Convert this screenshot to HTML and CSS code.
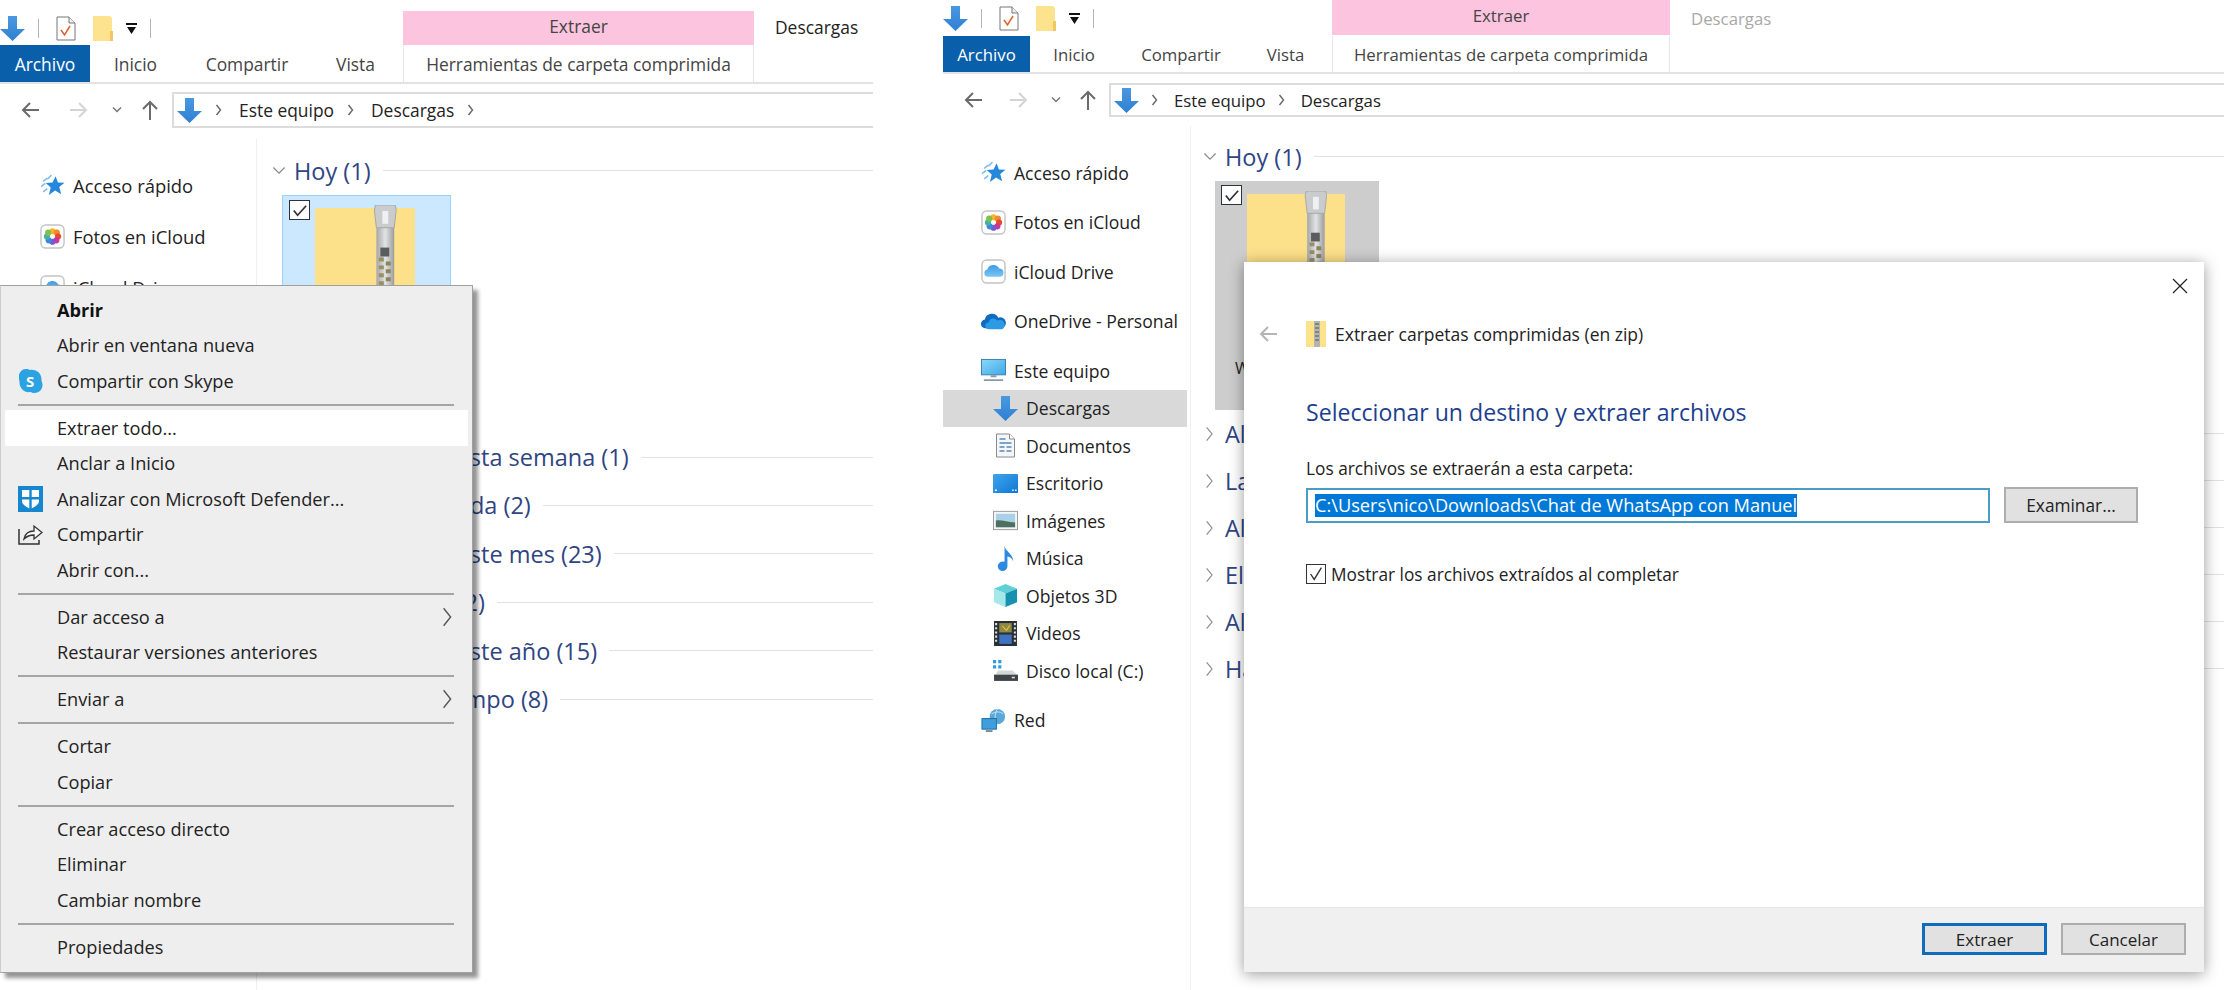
FILE: index.html
```html
<!DOCTYPE html>
<html lang="es">
<head>
    <meta charset="UTF-8">
    <title>Extraer todo</title>
    <link rel="stylesheet" href="styles.css">
</head>
<body>

    <svg class="defs" width="0" height="0">
        <defs>
            <linearGradient id="g-zipper" x1="0" x2="1" y1="0" y2="0"><stop offset="0" stop-color="#a4a6a8"/><stop offset=".5" stop-color="#e2e3e4"/><stop offset="1" stop-color="#9a9c9e"/></linearGradient>
            <linearGradient id="g-arrow" x1="0" x2="0" y1="0" y2="1"><stop offset="0" stop-color="#4a98e0"/><stop offset="1" stop-color="#2f80d4"/></linearGradient>
            <linearGradient id="g-cloud" x1="0" x2="0" y1="0" y2="1"><stop offset="0" stop-color="#3d9be8"/><stop offset="1" stop-color="#7cc6f2"/></linearGradient>
            <linearGradient id="g-screen" x1="0" x2="1" y1="0" y2="1"><stop offset="0" stop-color="#3fa4ee"/><stop offset="1" stop-color="#0f78d4"/></linearGradient>
            <linearGradient id="g-monitor" x1="0" x2="1" y1="0" y2="1"><stop offset="0" stop-color="#8cd8f8"/><stop offset="1" stop-color="#3fa8e6"/></linearGradient>
        </defs>
        <symbol id="i-down" viewBox="0 0 25 25"><path d="M8 0h9v13h8L12.500 25 0 13h8z" fill="url(#g-arrow)"/></symbol>
        <symbol id="i-doc" viewBox="0 0 20 25"><path d="M1 1h12l6 6v17H1z" fill="#fff" stroke="#777"/><path d="M13 1v6h6" fill="#eee" stroke="#777"/><path d="M5 14l3.500 5L14 10" fill="none" stroke="#d9622b" stroke-width="1.500"/></symbol>
        <symbol id="i-folder" viewBox="0 0 20 25"><path d="M0 0h17l2 2v23H0z" fill="#fde38e"/><path d="M17 15h3v10h-3z" fill="#f0c761"/></symbol>
        <symbol id="i-drop" viewBox="0 0 11 11"><path d="M0 0h11v2H0zM1 4h9L5.500 11z" fill="#111"/></symbol>
        <symbol id="i-back" viewBox="0 0 20 20"><path d="M19 10H3M10 3l-7 7 7 7" fill="none" stroke="currentColor" stroke-width="2"/></symbol>
        <symbol id="i-up" viewBox="0 0 20 22"><path d="M10 21V3M3 10l7-7 7 7" fill="none" stroke="currentColor" stroke-width="2"/></symbol>
        <symbol id="i-chev-down" viewBox="0 0 10 8"><path d="M1 1.500l4 4 4-4" fill="none" stroke="currentColor"/></symbol>
        <symbol id="i-chev-right" viewBox="0 0 8 12"><path d="M1.500 1l4 5-4 5" fill="none" stroke="currentColor"/></symbol>
        <symbol id="i-star" viewBox="0 0 24 24"><path d="M15 3l2.200 6 6.300.3-5 4.200 1.800 7-5.800-3.800L8.500 21l1.800-7-4.800-4.400 6.500-.4z" fill="#2688dc"/><path d="M11 2L7 6M7 5L3 8M5 10l-4 3M7 15l-4 3" stroke="#7fbdee" stroke-width="1.500"/></symbol>
        <symbol id="i-photos" viewBox="0 0 26 26"><rect x="1" y="1" width="24" height="24" rx="5" fill="#fff" stroke="#c4c4c4" stroke-width="1.500"/><circle cx="13" cy="7.500" r="3.200" fill="#f7b52c"/><circle cx="17.500" cy="9" r="3.200" fill="#f08a2c"/><circle cx="18.800" cy="13" r="3.200" fill="#e5492f"/><circle cx="17" cy="17" r="3.200" fill="#c9379a"/><circle cx="13" cy="18.500" r="3.200" fill="#7c58c8"/><circle cx="9" cy="17" r="3.200" fill="#3f86dc"/><circle cx="7.200" cy="13" r="3.200" fill="#3fb4a4"/><circle cx="8.500" cy="9" r="3.200" fill="#7fc04a"/></symbol>
        <symbol id="i-icloud" viewBox="0 0 26 26"><rect x="1" y="1" width="24" height="24" rx="5" fill="#fff" stroke="#c4c4c4" stroke-width="1.500"/><path d="M7 18.500a3.800 3.800 0 0 1-.5-7.500 6.800 6.800 0 0 1 12.500-1 4.300 4.300 0 0 1 1 8.500z" fill="url(#g-cloud)"/></symbol>
        <symbol id="i-onedrive" viewBox="0 0 26 18"><path d="M5 16a4.500 4.500 0 0 1-1-9 7.500 7.500 0 0 1 14-2 5.500 5.500 0 0 1 4 11z" fill="#0f6cc0"/><path d="M8 17a3.500 3.500 0 0 1 0-7 5 5 0 0 1 9-2 4.500 4.500 0 0 1 5 9z" fill="#2b9be6"/></symbol>
        <symbol id="i-monitor" viewBox="0 0 26 24"><rect x=".5" y=".5" width="25" height="16" fill="url(#g-monitor)" stroke="#3a7fb5"/><path d="M10 18h6M3 22h20" stroke="#8a9aa6" stroke-width="2"/></symbol>
        <symbol id="i-docs" viewBox="0 0 20 25"><path d="M1 1h13l5 5v18H1z" fill="#f4f7fa" stroke="#8a8a8a"/><path d="M14 1v5h5" fill="#fff" stroke="#8a8a8a"/><path d="M4 6h6M4 10h12M4 14h5M11 14h5M4 18h5M11 18h5" stroke="#5b89b5" stroke-width="1.500"/></symbol>
        <symbol id="i-desktop" viewBox="0 0 26 20"><rect width="26" height="20" rx="1" fill="url(#g-screen)"/><path d="M2 17h2M20 17h1.500M23 17h1.500" stroke="#fff" stroke-width="1.500"/></symbol>
        <symbol id="i-images" viewBox="0 0 26 20"><rect x=".5" y=".5" width="25" height="19" fill="#f5f5f5" stroke="#9a9a9a"/><rect x="3" y="3" width="20" height="14" fill="#a9d2ea"/><path d="M3 10c6-1 12 2 20 2v5H3z" fill="#4f6f60"/></symbol>
        <symbol id="i-music" viewBox="0 0 20 26"><path d="M9 0c1 6 9 8 9 16-1-3-4-5-6-5v10a5 5 0 1 1-3-4.500z" fill="#2c8ae0"/></symbol>
        <symbol id="i-cube" viewBox="0 0 26 26"><path d="M13 1l12 5-12 5L1 6z" fill="#5fd1d6"/><path d="M1 6l12 5v14L1 20z" fill="#a5e8ea"/><path d="M25 6l-12 5v14l12-5z" fill="#1592b0"/></symbol>
        <symbol id="i-film" viewBox="0 0 22 24"><rect width="22" height="24" fill="#2a2f36"/><rect x="5" y="2" width="12" height="9" fill="#8d8a45"/><rect x="5" y="13" width="12" height="9" fill="#3f72c0"/><path d="M8 5l4 4 3-5" stroke="#e8c23a" fill="none"/><path d="M2 2v20M20 2v20" stroke="#ddd" stroke-width="2" stroke-dasharray="2 2"/></symbol>
        <symbol id="i-disk" viewBox="0 0 24 22"><path d="M0 1h3v3H0zM5 1h3v3H5zM0 6h3v3H0zM5 6h3v3H5z" fill="#2f9ae0"/><path d="M2 15l3-4h14l4 4z" fill="#d5d8da"/><rect x="1" y="15" width="23" height="6" fill="#3f4449"/><rect x="18" y="17" width="3" height="1.500" fill="#ddd"/></symbol>
        <symbol id="i-net" viewBox="0 0 26 26"><circle cx="17" cy="9" r="8" fill="#5aa7d8"/><path d="M11 6c4-2 8-3 12 0M17 1c-3 5-3 11 0 16" stroke="#cfe6f5" fill="none"/><rect x="1" y="11" width="15" height="11" fill="#3f9fdc" stroke="#1c6aa5"/><path d="M5 24h7" stroke="#7a8a96" stroke-width="2"/></symbol>
        <symbol id="i-skype" viewBox="0 0 24 26"><path d="M7 1c2 0 3 .5 4 1 7-1 12 4 11.500 11 .5 1 1 2.500 1 4 0 5-4 8-8 8-2 0-3-.5-4-1C5 25 0 20 .5 13 0 12-.5 10.500-.5 9 0 4 3 1 7 1z" fill="#2ba3e2"/></symbol>
        <symbol id="i-shield" viewBox="0 0 25 26"><rect width="25" height="26" fill="#1487cf"/><path d="M4 4h17v11c0 4-5 6-8.500 8C9 21 4 19 4 15z" fill="#fff"/><path d="M11.300 4h2.400v19h-2.400zM4 11h17v2.400H4z" fill="#1487cf"/></symbol>
        <symbol id="i-share" viewBox="0 0 25 21"><path d="M1 5v15h20v-4" fill="none" stroke="#333" stroke-width="1.500"/><path d="M6 15c1-5 4-8 10-8V2l8 6.500-8 6.500v-4c-4 0-7 1-10 4z" fill="#f7f7f7" stroke="#333" stroke-width="1.300"/></symbol>
        <symbol id="i-zip" viewBox="0 -3 101 173" preserveAspectRatio="xMidYMin slice"><rect width="101" height="170" fill="#fde08a"/><rect x="62" y="0" width="18" height="170" fill="url(#g-zipper)"/><path d="M61 -3h20l1 5-2 18H62l-2-18z" fill="#c9cbcd" stroke="#a5a7a9"/><rect x="68" y="3" width="6" height="13" fill="#eef0f1"/><rect x="66" y="40" width="9" height="9" fill="#5a5c5e"/><path d="M67 50v120" stroke="#9a8e62" stroke-width="5" stroke-dasharray="4 4" fill="none"/><path d="M74 54v116" stroke="#8f8458" stroke-width="5" stroke-dasharray="4 4" fill="none"/></symbol>
        <symbol id="i-zip-small" viewBox="0 0 20 26"><rect width="20" height="26" fill="#fde28a"/><rect x="8" width="6" height="26" fill="#b5b5b0"/><path d="M9 3h4M9 7h4M9 11h4M9 15h4M9 19h4" stroke="#55524a"/></symbol>
    </svg>

    <div class="page">

        <!-- VENTANA IZQUIERDA -->
        <section class="explorer explorer-left">
            <div class="titlebar">
                <div class="qat">
                    <svg class="qat-arrow"><use href="#i-down"/></svg>
                    <span class="qat-sep"></span>
                    <svg class="qat-doc"><use href="#i-doc"/></svg>
                    <svg class="qat-folder"><use href="#i-folder"/></svg>
                    <svg class="qat-drop"><use href="#i-drop"/></svg>
                    <span class="qat-sep"></span>
                </div>
                <div class="context-tab">Extraer</div>
                <div class="window-title">Descargas</div>
            </div>
            <nav class="tabs">
                <div class="tab tab-file">Archivo</div>
                <div class="tab tab-home">Inicio</div>
                <div class="tab tab-share">Compartir</div>
                <div class="tab tab-view">Vista</div>
                <div class="tab tab-tools">Herramientas de carpeta comprimida</div>
            </nav>
            <div class="address-row">
                <svg class="nav-back"><use href="#i-back"/></svg>
                <svg class="nav-forward"><use href="#i-back"/></svg>
                <svg class="nav-recent"><use href="#i-chev-down"/></svg>
                <svg class="nav-up"><use href="#i-up"/></svg>
                <div class="address">
                    <svg class="address-icon"><use href="#i-down"/></svg>
                    <svg class="crumb-sep"><use href="#i-chev-right"/></svg>
                    <span class="crumb">Este equipo</span>
                    <svg class="crumb-sep"><use href="#i-chev-right"/></svg>
                    <span class="crumb">Descargas</span>
                    <svg class="crumb-sep"><use href="#i-chev-right"/></svg>
                </div>
            </div>
            <div class="main">
                <aside class="sidebar">
                    <div class="nav-item nav-top"><svg class="nav-icon"><use href="#i-star"/></svg>Acceso rápido</div>
                    <div class="nav-item nav-top"><svg class="nav-icon"><use href="#i-photos"/></svg>Fotos en iCloud</div>
                    <div class="nav-item nav-top"><svg class="nav-icon"><use href="#i-icloud"/></svg>iCloud Drive</div>
                </aside>
                <div class="content">
                    <div class="group"><svg class="group-chev"><use href="#i-chev-down"/></svg><span>Hoy (1)</span><i class="group-line"></i></div>
                    <div class="tile">
                        <span class="tile-check"><svg viewBox="0 0 20 20"><path d="M4 10l4 5 9-10" fill="none" stroke="#333" stroke-width="1.800"/></svg></span>
                        <svg class="tile-folder"><use href="#i-zip"/></svg>
                    </div>
                    <div class="group"><svg class="group-chev"><use href="#i-chev-right"/></svg><span>Al principio de esta semana (1)</span><i class="group-line"></i></div>
                    <div class="group"><svg class="group-chev"><use href="#i-chev-right"/></svg><span>La semana pasada (2)</span><i class="group-line"></i></div>
                    <div class="group"><svg class="group-chev"><use href="#i-chev-right"/></svg><span>Al principio de este mes (23)</span><i class="group-line"></i></div>
                    <div class="group"><svg class="group-chev"><use href="#i-chev-right"/></svg><span>El mes pasado (2)</span><i class="group-line"></i></div>
                    <div class="group"><svg class="group-chev"><use href="#i-chev-right"/></svg><span>Al principio de este año (15)</span><i class="group-line"></i></div>
                    <div class="group"><svg class="group-chev"><use href="#i-chev-right"/></svg><span>Hace mucho tiempo (8)</span><i class="group-line"></i></div>
                </div>
            </div>
        </section>

        <!-- VENTANA DERECHA -->
        <section class="explorer explorer-right">
            <div class="titlebar">
                <div class="qat">
                    <svg class="qat-arrow"><use href="#i-down"/></svg>
                    <span class="qat-sep"></span>
                    <svg class="qat-doc"><use href="#i-doc"/></svg>
                    <svg class="qat-folder"><use href="#i-folder"/></svg>
                    <svg class="qat-drop"><use href="#i-drop"/></svg>
                    <span class="qat-sep"></span>
                </div>
                <div class="context-tab">Extraer</div>
                <div class="window-title">Descargas</div>
            </div>
            <nav class="tabs">
                <div class="tab tab-file">Archivo</div>
                <div class="tab tab-home">Inicio</div>
                <div class="tab tab-share">Compartir</div>
                <div class="tab tab-view">Vista</div>
                <div class="tab tab-tools">Herramientas de carpeta comprimida</div>
            </nav>
            <div class="address-row">
                <svg class="nav-back"><use href="#i-back"/></svg>
                <svg class="nav-forward"><use href="#i-back"/></svg>
                <svg class="nav-recent"><use href="#i-chev-down"/></svg>
                <svg class="nav-up"><use href="#i-up"/></svg>
                <div class="address">
                    <svg class="address-icon"><use href="#i-down"/></svg>
                    <svg class="crumb-sep"><use href="#i-chev-right"/></svg>
                    <span class="crumb">Este equipo</span>
                    <svg class="crumb-sep"><use href="#i-chev-right"/></svg>
                    <span class="crumb">Descargas</span>
                </div>
            </div>
            <div class="main">
                <aside class="sidebar">
                    <div class="nav-item nav-top"><svg class="nav-icon"><use href="#i-star"/></svg>Acceso rápido</div>
                    <div class="nav-item nav-top"><svg class="nav-icon"><use href="#i-photos"/></svg>Fotos en iCloud</div>
                    <div class="nav-item nav-top"><svg class="nav-icon"><use href="#i-icloud"/></svg>iCloud Drive</div>
                    <div class="nav-item nav-top"><svg class="nav-icon"><use href="#i-onedrive"/></svg>OneDrive - Personal</div>
                    <div class="nav-item nav-top"><svg class="nav-icon"><use href="#i-monitor"/></svg>Este equipo</div>
                    <div class="nav-item nav-child nav-active"><svg class="nav-icon"><use href="#i-down"/></svg>Descargas</div>
                    <div class="nav-item nav-child"><svg class="nav-icon"><use href="#i-docs"/></svg>Documentos</div>
                    <div class="nav-item nav-child"><svg class="nav-icon"><use href="#i-desktop"/></svg>Escritorio</div>
                    <div class="nav-item nav-child"><svg class="nav-icon"><use href="#i-images"/></svg>Imágenes</div>
                    <div class="nav-item nav-child"><svg class="nav-icon"><use href="#i-music"/></svg>Música</div>
                    <div class="nav-item nav-child"><svg class="nav-icon"><use href="#i-cube"/></svg>Objetos 3D</div>
                    <div class="nav-item nav-child"><svg class="nav-icon"><use href="#i-film"/></svg>Videos</div>
                    <div class="nav-item nav-child"><svg class="nav-icon"><use href="#i-disk"/></svg>Disco local (C:)</div>
                    <div class="nav-item nav-top"><svg class="nav-icon"><use href="#i-net"/></svg>Red</div>
                </aside>
                <div class="content">
                    <div class="group"><svg class="group-chev"><use href="#i-chev-down"/></svg><span>Hoy (1)</span><i class="group-line"></i></div>
                    <div class="tile">
                        <span class="tile-check"><svg viewBox="0 0 20 20"><path d="M4 10l4 5 9-10" fill="none" stroke="#333" stroke-width="1.800"/></svg></span>
                        <svg class="tile-folder"><use href="#i-zip"/></svg>
                        <div class="tile-name">WhatsApp</div>
                    </div>
                    <div class="group"><svg class="group-chev"><use href="#i-chev-right"/></svg><span>Al principio de esta semana (1)</span><i class="group-line"></i></div>
                    <div class="group"><svg class="group-chev"><use href="#i-chev-right"/></svg><span>La semana pasada (2)</span><i class="group-line"></i></div>
                    <div class="group"><svg class="group-chev"><use href="#i-chev-right"/></svg><span>Al principio de este mes (23)</span><i class="group-line"></i></div>
                    <div class="group"><svg class="group-chev"><use href="#i-chev-right"/></svg><span>El mes pasado (2)</span><i class="group-line"></i></div>
                    <div class="group"><svg class="group-chev"><use href="#i-chev-right"/></svg><span>Al principio de este año (15)</span><i class="group-line"></i></div>
                    <div class="group"><svg class="group-chev"><use href="#i-chev-right"/></svg><span>Hace mucho tiempo (8)</span><i class="group-line"></i></div>
                </div>
            </div>
        </section>

        <!-- MENU CONTEXTUAL -->
        <div class="menu">
            <div class="menu-item menu-bold">Abrir</div>
            <div class="menu-item">Abrir en ventana nueva</div>
            <div class="menu-item"><svg class="menu-icon icon-skype"><use href="#i-skype"/></svg><span class="skype-s">S</span>Compartir con Skype</div>
            <hr class="menu-sep">
            <div class="menu-item menu-hover">Extraer todo...</div>
            <div class="menu-item">Anclar a Inicio</div>
            <div class="menu-item"><svg class="menu-icon icon-shield"><use href="#i-shield"/></svg>Analizar con Microsoft Defender...</div>
            <div class="menu-item"><svg class="menu-icon icon-share"><use href="#i-share"/></svg>Compartir</div>
            <div class="menu-item">Abrir con...</div>
            <hr class="menu-sep">
            <div class="menu-item">Dar acceso a<svg class="menu-arrow"><use href="#i-chev-right"/></svg></div>
            <div class="menu-item">Restaurar versiones anteriores</div>
            <hr class="menu-sep">
            <div class="menu-item">Enviar a<svg class="menu-arrow"><use href="#i-chev-right"/></svg></div>
            <hr class="menu-sep">
            <div class="menu-item">Cortar</div>
            <div class="menu-item">Copiar</div>
            <hr class="menu-sep">
            <div class="menu-item">Crear acceso directo</div>
            <div class="menu-item">Eliminar</div>
            <div class="menu-item">Cambiar nombre</div>
            <hr class="menu-sep">
            <div class="menu-item">Propiedades</div>
        </div>

        <!-- DIALOGO -->
        <div class="dialog">
            <div class="dialog-top">
                <svg class="dialog-close" viewBox="0 0 16 16"><path d="M1 1l14 14M15 1L1 15" stroke="#222" stroke-width="1.200"/></svg>
            </div>
            <div class="dialog-nav">
                <svg class="dialog-back"><use href="#i-back"/></svg>
                <svg class="dialog-zip"><use href="#i-zip-small"/></svg>
                <span>Extraer carpetas comprimidas (en zip)</span>
            </div>
            <div class="dialog-body">
                <h2 class="dialog-heading">Seleccionar un destino y extraer archivos</h2>
                <div class="dialog-label">Los archivos se extraerán a esta carpeta:</div>
                <div class="dialog-path">
                    <div class="path-input"><span class="path-selected">C:\Users\nico\Downloads\Chat de WhatsApp con Manuel</span></div>
                    <div class="btn btn-browse">Examinar...</div>
                </div>
                <div class="dialog-check">
                    <span class="check-box"><svg viewBox="0 0 20 20"><path d="M4 10l4 6 8-13" fill="none" stroke="#333" stroke-width="1.500"/></svg></span>
                    Mostrar los archivos extraídos al completar
                </div>
            </div>
            <div class="dialog-footer">
                <div class="btn btn-primary">Extraer</div>
                <div class="btn">Cancelar</div>
            </div>
        </div>

    </div>

</body>
</html>
```

FILE: styles.css
```css
*{
    margin: 0;
    padding: 0;
    box-sizing: border-box;
}

body{
    font-family: "Open Sans", "Noto Sans", sans-serif;
    font-size: 16px;
    color: #222;
    background-color: #fff;
    overflow: hidden;
}

.defs{
    position: absolute;
}

.page{
    position: relative;
    display: flex;
    height: 990px;
    overflow: hidden;
}

svg{
    display: block;
    flex: none;
}


/* VENTANA */

.explorer{
    display: flex;
    flex-direction: column;
    flex: none;
}

.explorer-left{
    width: 873px;
    --text: 17.400px;
}

.explorer-right{
    width: 1281px;
    margin-left: 70px;
    --text: 16.800px;
}

.titlebar{
    display: flex;
}

.explorer-left .titlebar{
    height: 45px;
    padding-top: 11px;
}

.explorer-right .titlebar{
    height: 36px;
}

.qat{
    display: flex;
    align-items: center;
}

.explorer-left .qat{
    width: 403px;
}

.explorer-right .qat{
    width: 389px;
}

.qat-arrow{
    width: 25px;
    height: 25px;
}

.qat-sep{
    width: 1px;
    height: 19px;
    background-color: #b5b5b5;
    margin: 0 0 0 13px;
}

.qat-doc{
    width: 20px;
    height: 25px;
    margin-left: 17px;
}

.qat-folder{
    width: 20px;
    height: 25px;
    margin-left: 17px;
}

.qat-drop{
    width: 11px;
    height: 11px;
    margin-left: 13px;
}

.context-tab{
    background-color: #fcc4de;
    text-align: center;
    font-size: var(--text);
    color: #444;
    line-height: 31px;
}

.explorer-left .context-tab{
    width: 351px;
}

.explorer-right .context-tab{
    width: 338px;
    height: 35px;
}

.window-title{
    font-size: var(--text);
    line-height: 33px;
}

.explorer-left .window-title{
    margin-left: 21px;
}

.explorer-right .window-title{
    margin-left: 21px;
    color: #a8a8a8;
    line-height: 38px;
}


/* PESTAÑAS */

.tabs{
    display: flex;
    border-bottom: 2px solid #e2e2e2;
    font-size: var(--text);
    color: #444;
}

.explorer-left .tabs{
    height: 39px;
}

.explorer-right .tabs{
    height: 38px;
}

.tab{
    display: flex;
    align-items: center;
    justify-content: center;
}

.tab-file{
    background-color: #0a5fab;
    color: #fff;
}

.tab-tools{
    border-left: 1px solid #e6e6e6;
    border-right: 1px solid #e6e6e6;
}

.explorer-left .tab-file{ width: 90px; }
.explorer-left .tab-home{ width: 91px; }
.explorer-left .tab-share{ width: 132px; }
.explorer-left .tab-view{ width: 85px; }
.explorer-left .tab-tools{ width: 351px; margin-left: 5px; }

.explorer-right .tab-file{ width: 87px; }
.explorer-right .tab-home{ width: 88px; }
.explorer-right .tab-share{ width: 126px; }
.explorer-right .tab-view{ width: 83px; }
.explorer-right .tab-tools{ width: 338px; margin-left: 5px; }


/* DIRECCION */

.address-row{
    display: flex;
    align-items: center;
}

.explorer-left .address-row{
    height: 55px;
    padding: 8px 0 11px 0;
}

.explorer-right .address-row{
    height: 52px;
    padding: 9px 0 9px 0;
}

.nav-back{
    width: 20px;
    height: 20px;
    margin-left: 20px;
    color: #6a6a6a;
}

.nav-forward{
    width: 20px;
    height: 20px;
    margin-left: 29px;
    color: #d4d4d4;
    transform: scaleX(-1);
}

.explorer-right .nav-forward{
    margin-left: 26px;
}

.nav-recent{
    width: 10px;
    height: 8px;
    margin-left: 23px;
    color: #777;
    stroke-width: 1.500px;
}

.explorer-right .nav-recent{
    margin-left: 22px;
}

.nav-up{
    width: 20px;
    height: 22px;
    margin-left: 18px;
    color: #6a6a6a;
}

.explorer-right .nav-up{
    margin-left: 17px;
}

.address{
    display: flex;
    align-items: center;
    flex: 1;
    height: 100%;
    border: 2px solid #dcdcdc;
    border-right: 0;
    padding-left: 3px;
    font-size: var(--text);
    margin-left: 12px;
}

.explorer-right .address{
    margin-left: 11px;
}

.address-icon{
    width: 25px;
    height: 25px;
}

.crumb-sep{
    width: 8px;
    height: 12px;
    margin: 0 16px 0 13px;
    color: #666;
    stroke-width: 1.400px;
}

.explorer-right .crumb-sep{
    margin: 0 15px 0 12px;
}

.crumb{
    color: #222;
}


/* LATERAL */

.main{
    display: flex;
    flex: 1;
}

.sidebar{
    flex: none;
    border-right: 1px solid #f0f0f0;
}

.explorer-left .sidebar{
    width: 257px;
    padding-top: 15px;
    font-size: 18.400px;
}

.explorer-right .sidebar{
    width: 248px;
    padding-top: 16px;
    font-size: 17.600px;
}

.nav-item{
    display: flex;
    align-items: center;
    height: 37.500px;
}

.nav-top{
    margin-top: 12px;
    padding-left: 38px;
}

.explorer-left .nav-top{
    height: 39px;
    padding-left: 40px;
}

.nav-child{
    padding-left: 50px;
}

.nav-active{
    background-color: #d9d9d9;
    margin-right: 3px;
}

.nav-icon{
    width: 25px;
    height: 25px;
    margin-right: 8px;
}


/* CONTENIDO */

.content{
    flex: 1;
    min-width: 0;
}

.explorer-left .content{
    padding: 7.500px 0 0 15px;
}

.explorer-right .content{
    padding: 7px 0 0 12px;
}

.group{
    display: flex;
    align-items: center;
    font-size: 23.500px;
    color: #2f4583;
    white-space: nowrap;
}

.explorer-left .group{
    height: 48.400px;
}

.explorer-right .group{
    height: 47px;
}

.group-chev{
    width: 14px;
    height: 16px;
    margin-right: 8px;
    color: #8c8c8c;
    stroke-width: 0.900px;
}

.group-line{
    flex: 1;
    height: 1px;
    background-color: #e2e2e2;
    margin-left: 12px;
}

.tile{
    position: relative;
    display: flex;
    flex-direction: column;
}

.explorer-left .tile{
    width: 169px;
    height: 238px;
    margin-left: 10px;
    background-color: #cce8ff;
    border: 1px solid #99d1ff;
    padding: 9px 0 0 32px;
}

.explorer-right .tile{
    width: 164px;
    height: 229px;
    margin: 1px 0 0 12px;
    background-color: #cdcdcd;
    padding: 10px 0 0 32px;
}

.tile-check{
    position: absolute;
    top: 4px;
    left: 6px;
    width: 21px;
    height: 20px;
    background-color: #fff;
    border: 1.500px solid #2c3340;
}

.tile-folder{
    width: 100px;
    height: 170px;
}

.explorer-right .tile-folder{
    width: 98px;
    height: 158px;
}

.tile-name{
    font-size: 16px;
    margin: 8px 0 0 -12px;
}


/* MENU */

.menu{
    position: absolute;
    left: 0;
    top: 285px;
    width: 473px;
    height: 688px;
    background-color: #eee;
    border: 1px solid #a0a0a0;
    border-left-color: #ccc;
    box-shadow: 5px 5px 4px rgba(0, 0, 0, 0.42);
    padding: 6px 4px 0 4px;
    font-size: 18.200px;
    color: #222;
}

.menu-item{
    position: relative;
    display: flex;
    align-items: center;
    height: 35.500px;
    padding-left: 52px;
}

.menu-bold{
    font-weight: 700;
    color: #111;
}

.menu-hover{
    background-color: #fff;
}

.menu-sep{
    border: 0;
    border-top: 2px solid #a5a5a5;
    margin: 5px 14px 4.500px 13px;
}

.menu-icon{
    position: absolute;
    left: 13px;
}

.icon-skype{
    width: 24px;
    height: 26px;
    left: 14px;
}

.skype-s{
    position: absolute;
    left: 21px;
    color: #fff;
    font-weight: 700;
    font-size: 15px;
}

.icon-shield{
    width: 25px;
    height: 26px;
}

.icon-share{
    width: 25px;
    height: 21px;
}

.menu-arrow{
    position: absolute;
    right: 13px;
    width: 14px;
    height: 22px;
    color: #555;
    stroke-width: 0.800px;
}


/* DIALOGO */

.dialog{
    position: absolute;
    left: 1244px;
    top: 262px;
    width: 960px;
    height: 710px;
    display: flex;
    flex-direction: column;
    background-color: #fff;
    box-shadow: 0 2px 14px rgba(0, 0, 0, 0.4);
    font-size: 17.300px;
}

.dialog-top{
    display: flex;
    justify-content: flex-end;
    align-items: center;
    height: 48px;
    padding-right: 16px;
}

.dialog-close{
    width: 16px;
    height: 16px;
}

.dialog-nav{
    display: flex;
    align-items: center;
    height: 26px;
    margin-top: 11px;
    padding-left: 14px;
    font-size: 17.500px;
}

.dialog-back{
    width: 20px;
    height: 20px;
    color: #b5b5b5;
}

.dialog-zip{
    width: 20px;
    height: 26px;
    margin: 0 9px 0 28px;
}

.dialog-body{
    flex: 1;
    padding: 50px 0 0 62px;
}

.dialog-heading{
    font-size: 23.100px;
    font-weight: 400;
    color: #1d3f8f;
    line-height: 30px;
}

.dialog-label{
    margin-top: 31px;
    line-height: 22px;
}

.dialog-path{
    display: flex;
    align-items: center;
    margin-top: 7px;
}

.path-input{
    display: flex;
    align-items: center;
    width: 684px;
    height: 35px;
    border: 2px solid #4b9cc4;
    padding-left: 7px;
    font-size: 18.200px;
}

.path-selected{
    background-color: #0078d7;
    color: #fff;
    line-height: 23px;
}

.btn{
    display: flex;
    align-items: center;
    justify-content: center;
    width: 125px;
    height: 32px;
    background-color: #e1e1e1;
    border: 2px solid #adadad;
}

.btn-browse{
    width: 134px;
    height: 36px;
    margin-left: 14px;
}

.btn-primary{
    border: 3px solid #0f6cbd;
}

.dialog-check{
    display: flex;
    align-items: center;
    margin-top: 41px;
    height: 20px;
}

.check-box{
    width: 20px;
    height: 20px;
    border: 1px solid #333;
    margin-right: 5px;
}

.dialog-footer{
    display: flex;
    justify-content: flex-end;
    gap: 14px;
    height: 65px;
    padding: 15px 18px 0 0;
    background-color: #f0f0f0;
    border-top: 1px solid #e6e6e6;
    font-size: 17px;
}
```
